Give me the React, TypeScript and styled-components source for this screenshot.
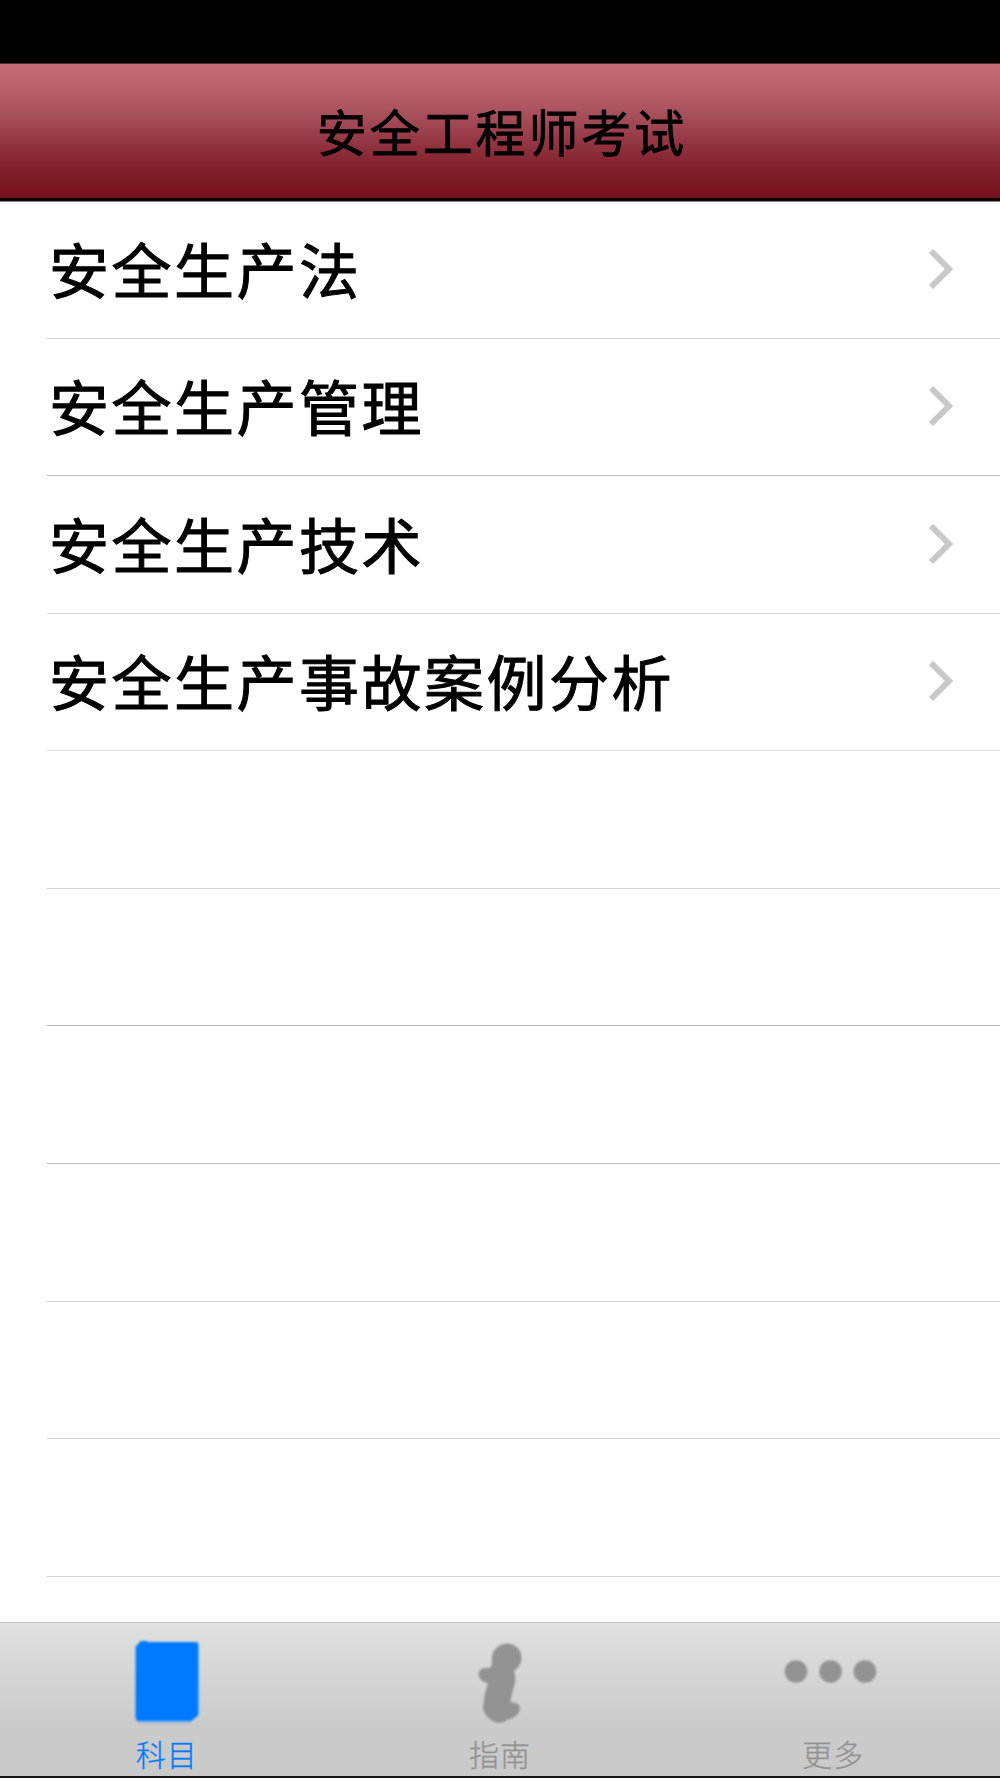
import React from "react";
import styled, { createGlobalStyle } from "styled-components";

const Global = createGlobalStyle`
  * { box-sizing: border-box; }
  body { margin: 0; background: #fff; font-family: "Noto Sans CJK SC", sans-serif; }
`;
const Screen = styled.div`
  width: 1000px; height: 1778px; display: flex; flex-direction: column;
  overflow: hidden; background: #fff; color: #000;
`;
const StatusBar = styled.div`
  flex: none; height: 63px; background: #000;
`;
const NavBar = styled.header`
  flex: none; height: 138px; display: flex; align-items: center; justify-content: center;
  border-top: 1px solid #4b2a30; border-bottom: 3px solid #0c0002;
  background: linear-gradient(#c36a77 0%, #bc6370 15%, #a84f5c 38%, #8f303d 63%, #801e2b 80%, #75121e 100%);
`;
const Title = styled.h1`
  margin: 0; padding: 0 0 2px 4px; font-size: 50px; line-height: 60px; font-weight: 400;
  letter-spacing: 2.9px; -webkit-text-stroke: 0.8px #000;
`;
const List = styled.ul`
  flex: 1; min-height: 0; overflow: hidden; margin: 0; padding: 0 0 0 47px; list-style: none;
  border-top: 1px solid #8a8a8a;
`;
const Row = styled.li<{ $line: string }>`
  height: 137.55px; display: flex; align-items: center; justify-content: space-between;
  padding: 0 46px 0 2px; border-bottom: 1px solid ${(p) => p.$line};
  &:first-child { height: 136.7px; }
`;
const Label = styled.span`
  padding-bottom: 4px; font-size: 60px; line-height: 80px; letter-spacing: 2.5px;
  -webkit-text-stroke: 1px #000;
`;
const TabBar = styled.nav`
  flex: none; height: 156px; display: grid; grid-template-columns: repeat(3, 1fr);
  border-top: 1px solid #c4c4c4; border-bottom: 2px solid #141414;
  background: linear-gradient(#e0e0e0, #cbcbcb 65%, #c9c9c9);
`;
const Tab = styled.div<{ $active?: boolean }>`
  display: flex; flex-direction: column; align-items: center;
  color: ${(p) => (p.$active ? "#007aff" : "#929292")};
  svg { display: block; margin-top: 13px; filter: blur(0.8px); }
`;
const TabLabel = styled.span`
  font-size: 30px; line-height: 36px; font-weight: 300; margin-top: 5px; letter-spacing: 1px;
  -webkit-text-stroke: 0.3px currentColor;
`;

const Chevron = () => (
  <svg width="26" height="42" viewBox="0 0 26 42" fill="none" stroke="#c7c7cc" strokeWidth="6">
    <path d="M3 2 L21 20 L3 38" />
  </svg>
);
const Book = () => (
  <svg width="100" height="94" viewBox="0 0 100 94" fill="currentColor">
    <path d="M23.5 5 L29.5 5 L31.5 6 H79.5 Q81.5 6 81.5 9 V79 L74.5 85 H22.5 Q18.5 85 18.5 81 V11 Z" />
    <path d="M19 84 H74 V88 H21 Z" opacity=".18" />
  </svg>
);
const Guide = () => (
  <svg width="100" height="94" viewBox="0 0 100 94" fill="currentColor">
    <path d="M50.5 9 Q57 6 64 9 Q71.5 14 71.5 22 Q71.5 30 64 35 Q67 43 63 54 L60 66 Q70 66 70 73 Q70 80 57 84 Q49 90 41 84 Q33 78 33 71 Q34 59 38 47 Q28.5 45 28.5 38 Q29 32 35 32 Q41 33 42 28 Q40 14 50.5 9 Z" />
  </svg>
);
const More = () => (
  <svg width="100" height="94" viewBox="0 0 100 94" fill="currentColor">
    <circle cx="13" cy="35.5" r="11.3" />
    <circle cx="47.5" cy="35.5" r="11.3" />
    <circle cx="82" cy="35.5" r="11.3" />
  </svg>
);

const rows = [
  { name: "安全生产法", line: "#d2d2d5" },
  { name: "安全生产管理", line: "#b8b8ba" },
  { name: "安全生产技术", line: "#d6d6d9" },
  { name: "安全生产事故案例分析", line: "#e0e0e2" },
  { name: "", line: "#d2d2d5" },
  { name: "", line: "#b8b8ba" },
  { name: "", line: "#b8b8ba" },
  { name: "", line: "#d2d2d5" },
  { name: "", line: "#d6d6d9" },
  { name: "", line: "#d2d2d9" },
];

export default function App() {
  return (
    <Screen>
      <Global />
      <StatusBar />
      <NavBar><Title>安全工程师考试</Title></NavBar>
      <List>
        {rows.map(({ name, line }, i) => (
          <Row key={i} $line={line}>{name && <><Label>{name}</Label><Chevron /></>}</Row>
        ))}
      </List>
      <TabBar>
        <Tab $active><Book /><TabLabel>科目</TabLabel></Tab>
        <Tab><Guide /><TabLabel>指南</TabLabel></Tab>
        <Tab><More /><TabLabel>更多</TabLabel></Tab>
      </TabBar>
    </Screen>
  );
}
